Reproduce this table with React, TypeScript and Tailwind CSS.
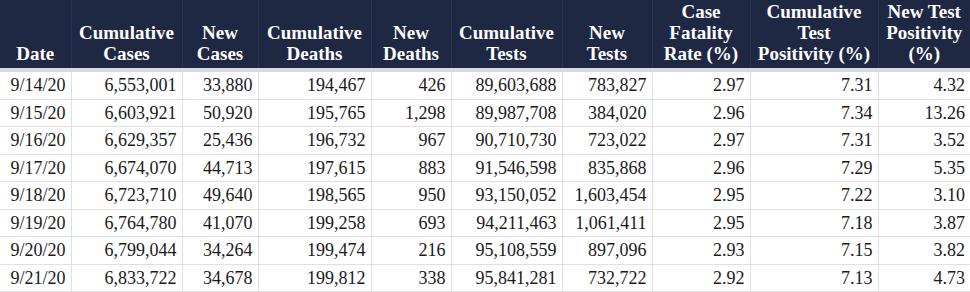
import React from 'react';

const cols = [
  { label: ['Date'], w: 'w-[71px]' },
  { label: ['Cumulative', 'Cases'], w: 'w-[111px]' },
  { label: ['New', 'Cases'], w: 'w-[76px]' },
  { label: ['Cumulative', 'Deaths'], w: 'w-[113px]' },
  { label: ['New', 'Deaths'], w: 'w-[80px]' },
  { label: ['Cumulative', 'Tests'], w: 'w-[111px]' },
  { label: ['New', 'Tests'], w: 'w-[90px]' },
  { label: ['Case', 'Fatality', 'Rate (%)'], w: 'w-[98px]' },
  { label: ['Cumulative', 'Test', 'Positivity (%)'], w: 'w-[128px]' },
  { label: ['New Test', 'Positivity', '(%)'], w: 'w-[92px]' },
];

const rows = [
  ['9/14/20', '6,553,001', '33,880', '194,467', '426', '89,603,688', '783,827', '2.97', '7.31', '4.32'],
  ['9/15/20', '6,603,921', '50,920', '195,765', '1,298', '89,987,708', '384,020', '2.96', '7.34', '13.26'],
  ['9/16/20', '6,629,357', '25,436', '196,732', '967', '90,710,730', '723,022', '2.97', '7.31', '3.52'],
  ['9/17/20', '6,674,070', '44,713', '197,615', '883', '91,546,598', '835,868', '2.96', '7.29', '5.35'],
  ['9/18/20', '6,723,710', '49,640', '198,565', '950', '93,150,052', '1,603,454', '2.95', '7.22', '3.10'],
  ['9/19/20', '6,764,780', '41,070', '199,258', '693', '94,211,463', '1,061,411', '2.95', '7.18', '3.87'],
  ['9/20/20', '6,799,044', '34,264', '199,474', '216', '95,108,559', '897,096', '2.93', '7.15', '3.82'],
  ['9/21/20', '6,833,722', '34,678', '199,812', '338', '95,841,281', '732,722', '2.92', '7.13', '4.73'],
];

export default function App() {
  return (
    <div className="w-[970px] h-[292px] overflow-hidden bg-white font-['Liberation_Serif',serif] text-[#1a1a1a]">
      <table className="table-fixed border-collapse w-[970px]">
        <colgroup>
          {cols.map((c, i) => (
            <col key={i} className={c.w} />
          ))}
        </colgroup>
        <thead>
          <tr className="h-[70px] bg-[#1f2843] border-b-[4px] border-[#d4d9e3]">
            {cols.map((c, i) => (
              <th
                key={i}
                className="align-bottom text-center text-white font-bold text-[19px] leading-[21px] pb-[4px] px-0 border-l border-[#2a3350] first:border-l-0"
              >
                {c.label.map((l, j) => (
                  <div key={j} className="whitespace-nowrap">{l}</div>
                ))}
              </th>
            ))}
          </tr>
        </thead>
        <tbody>
          {rows.map((r, i) => (
            <tr key={i} className="h-[27px] border-b border-[#e0e0e0]">
              {r.map((v, j) => (
                <td
                  key={j}
                  className="text-right text-[18px] leading-[25.5px] pr-[5px] pl-0 pt-[1px] pb-0 border-l border-[#e0e0e0] first:border-l-0 whitespace-nowrap"
                >
                  {v}
                </td>
              ))}
            </tr>
          ))}
        </tbody>
      </table>
    </div>
  );
}
